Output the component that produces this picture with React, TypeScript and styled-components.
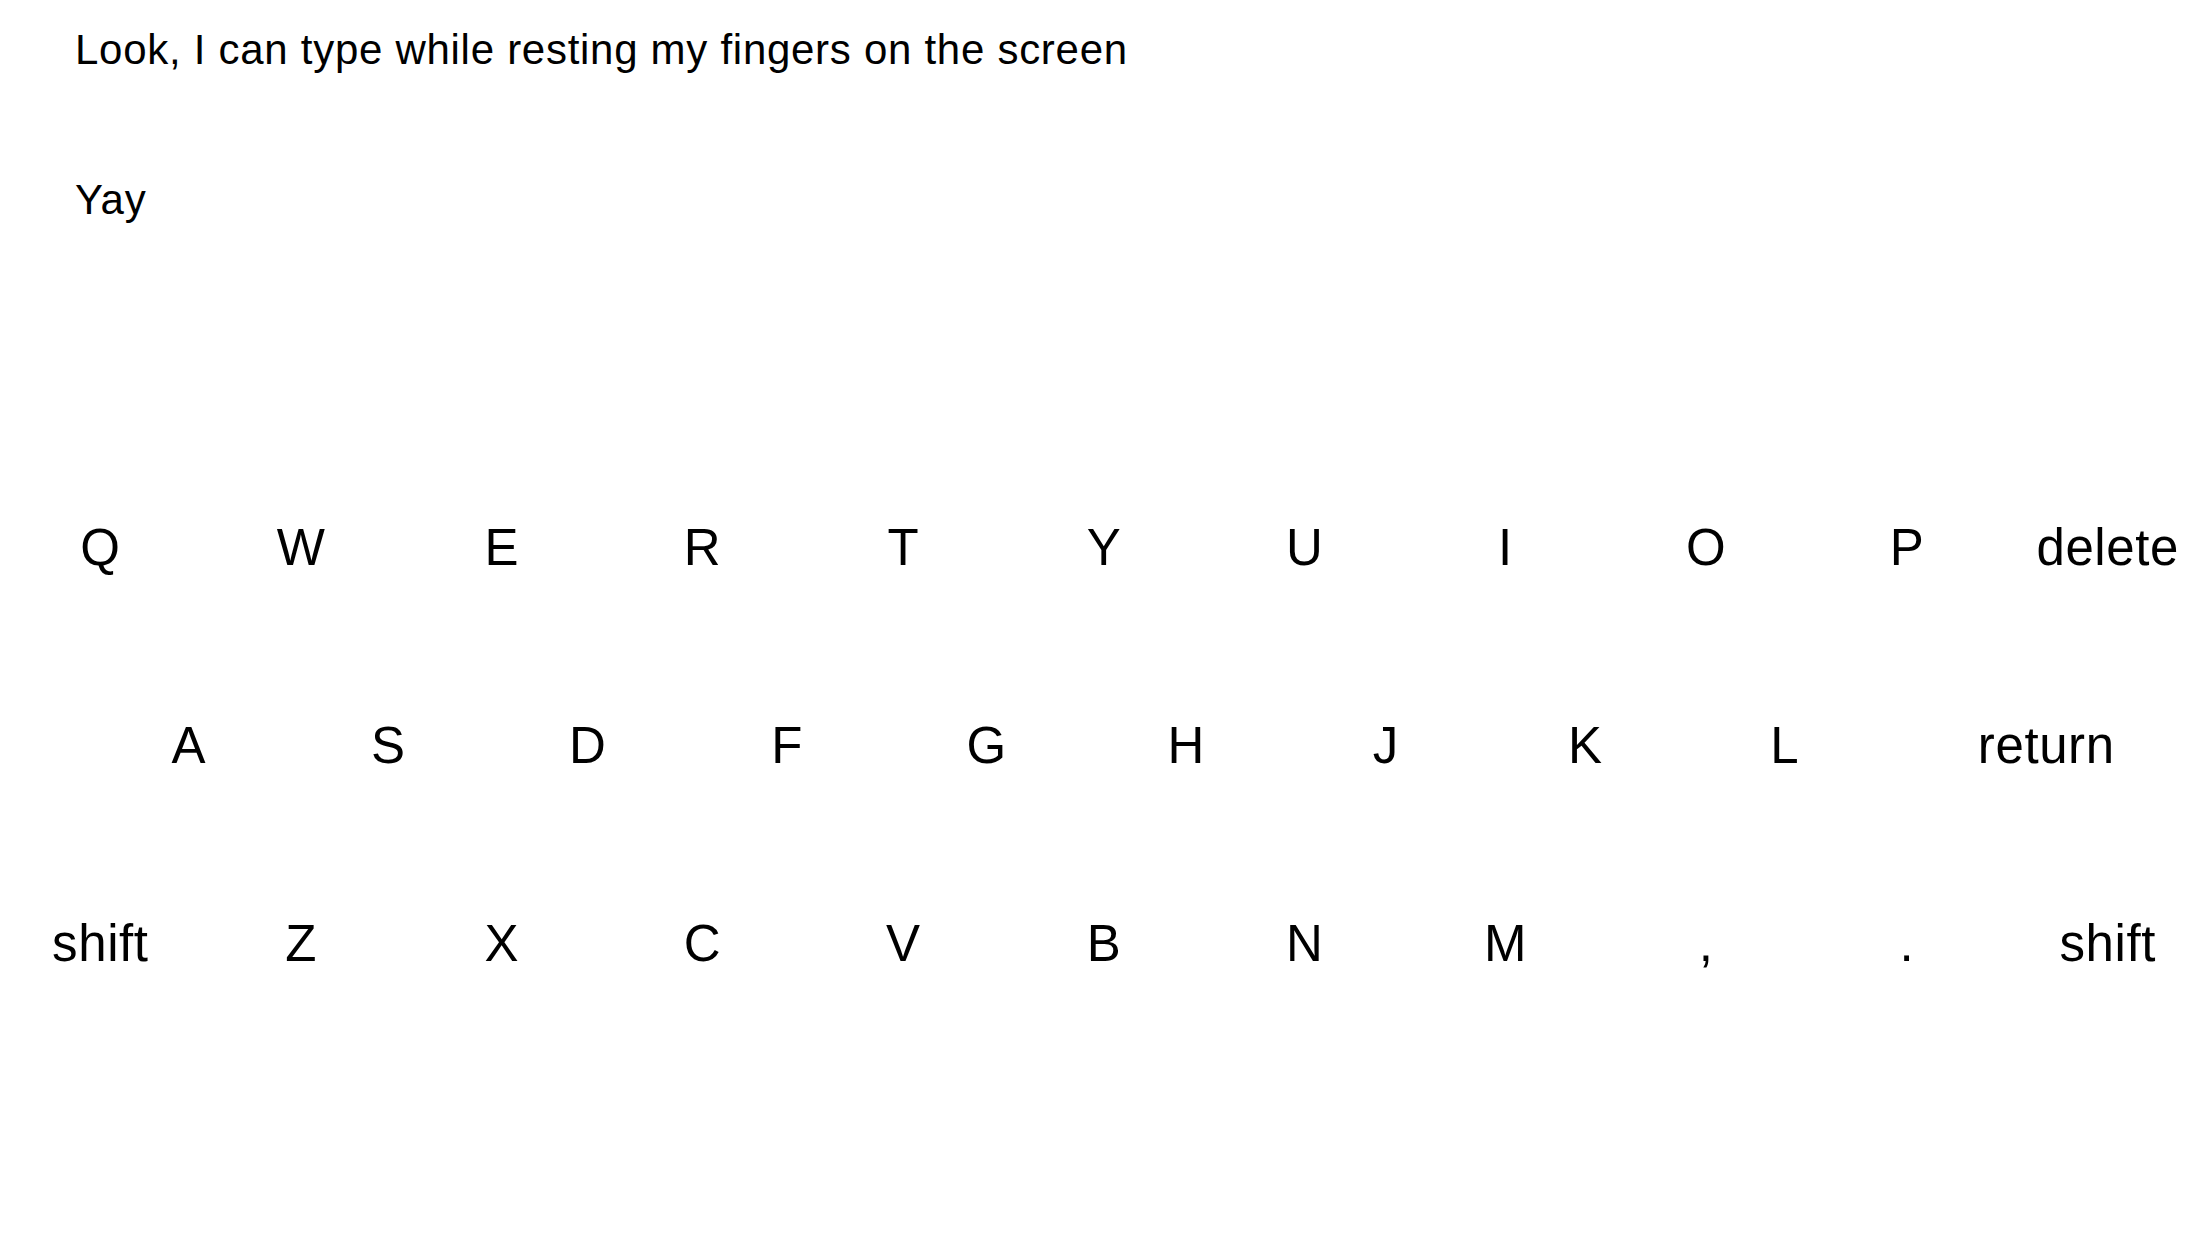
import React, { FC } from "react";
import styled, { createGlobalStyle } from "styled-components";

const GlobalStyle = createGlobalStyle`
  html, body {
    margin: 0;
    padding: 0;
    background: #ffffff;
  }
  body {
    font-family: "Liberation Sans", Arial, Helvetica, sans-serif;
    color: #000000;
  }
`;

const Screen = styled.div`
  width: 2208px;
  height: 1242px;
  display: flex;
  flex-direction: column;
  overflow: hidden;
  background: #ffffff;
`;

const Notes = styled.div`
  display: flex;
  flex-direction: column;
  gap: 100px;
  padding: 25px 0 0 75px;
`;

const Line = styled.div`
  font-size: 42px;
  line-height: 50px;
  letter-spacing: 0.72px;
  white-space: nowrap;
`;

const Keyboard = styled.div`
  display: flex;
  flex-direction: column;
  margin-top: 224px;
`;

const Row = styled.div<{ $inset?: number }>`
  display: flex;
  align-items: center;
  height: 198px;
  padding-left: ${(p) => p.$inset ?? 0}px;
`;

const Key = styled.div<{ $width?: number }>`
  flex: ${(p) => (p.$width ? `0 0 ${p.$width}px` : "1 1 0")};
  display: flex;
  align-items: center;
  justify-content: center;
  height: 100%;
  font-size: 51px;
  line-height: 50px;
  letter-spacing: 0.6px;
  white-space: nowrap;
  user-select: none;
`;

const topRow = ["Q", "W", "E", "R", "T", "Y", "U", "I", "O", "P", "delete"];
const homeRow = ["A", "S", "D", "F", "G", "H", "J", "K", "L"];
const bottomRow = ["shift", "Z", "X", "C", "V", "B", "N", "M", ",", ".", "shift"];

const App: FC = () => (
  <Screen>
    <GlobalStyle />
    <Notes>
      <Line>Look, I can type while resting my fingers on the screen</Line>
      <Line>Yay</Line>
    </Notes>
    <Keyboard>
      <Row>
        {topRow.map((k, i) => (
          <Key key={i}>{k}</Key>
        ))}
      </Row>
      <Row $inset={89}>
        {homeRow.map((k) => (
          <Key key={k} $width={199.5}>
            {k}
          </Key>
        ))}
        <Key>return</Key>
      </Row>
      <Row>
        {bottomRow.map((k, i) => (
          <Key key={i}>{k}</Key>
        ))}
      </Row>
    </Keyboard>
  </Screen>
);

export default App;
